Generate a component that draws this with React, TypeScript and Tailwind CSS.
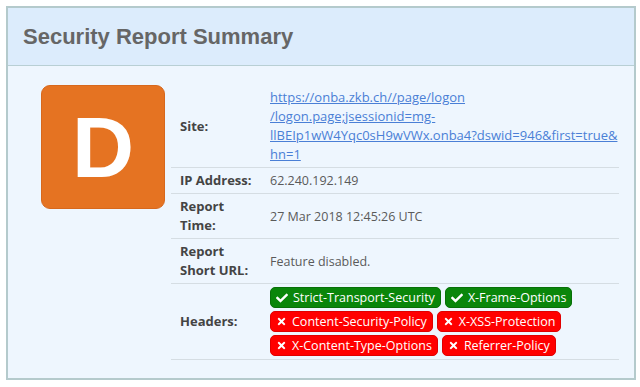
import { FaCheck, FaTimes } from 'react-icons/fa';

const good = ['Strict-Transport-Security', 'X-Frame-Options'];
const bad = ['Content-Security-Policy', 'X-XSS-Protection', 'X-Content-Type-Options', 'Referrer-Policy'];

function Badge({ ok, label }: { ok: boolean; label: string }) {
  return (
    <span
      className={
        ok
          ? 'inline-flex items-center gap-[5px] h-[21px] px-[5px] rounded-[5px] bg-[#0a860a] border border-[#087008] text-white text-[12.5px]'
          : 'inline-flex items-center gap-[5px] h-[21px] px-[5px] rounded-[5px] bg-[#ff0000] border border-[#e00000] text-white text-[12.5px]'
      }
    >
      {ok ? <FaCheck className="w-[12px] h-[12px]" /> : <FaTimes className="w-[11px] h-[11px]" />}
      {label}
    </span>
  );
}

function Row({ label, children }: { label: React.ReactNode; children: React.ReactNode }) {
  return (
    <div className="flex items-center border-b border-[#d5dde3] py-[3px]">
      <div className="w-[99px] shrink-0 pl-[9px] font-bold text-[#444] text-[13px]">{label}</div>
      <div className="flex-1 text-[#5a5a5a] text-[12.5px]">{children}</div>
    </div>
  );
}

export default function App() {
  return (
    <div className="w-[640px] h-[387px] bg-white pt-[6px] pl-[6px]" style={{ fontFamily: '"Open Sans", sans-serif' }}>
      <div className="w-[630px] h-[374px] border-2 border-[#b4cacc] bg-[#eef6fe] flex flex-col overflow-hidden">
        <div className="h-[58px] shrink-0 bg-[#dcecfc] border-b border-[#b8cfd4] flex items-center pl-[15px]">
          <h1 className="text-[22px] font-bold text-[#666]" style={{ fontFamily: '"Liberation Sans", Arial, sans-serif' }}>
            Security Report Summary
          </h1>
        </div>
        <div className="flex pt-[19px] pl-[33px] pr-[15px] leading-[19px]">
          <div className="w-[124px] h-[124px] shrink-0 rounded-[9px] bg-[#e57322] border border-[#d7681d] flex items-center justify-center">
            <span className="text-white font-bold text-[86px] leading-none" style={{ fontFamily: '"Liberation Sans", Arial, sans-serif' }}>
              D
            </span>
          </div>
          <div className="flex-1 ml-[6px] flex flex-col">
            <Row label="Site:">
              <a href="#" className="text-[#4a7fd6] underline break-all text-[13px]">
                https://onba.zkb.ch//page/logon
                <br />
                /logon.page;jsessionid=mg-
                <br />
                llBEIp1wW4Yqc0sH9wVWx.onba4?dswid=946&amp;first=true&amp;
                <br />
                hn=1
              </a>
            </Row>
            <Row label="IP Address:">62.240.192.149</Row>
            <Row label={<>Report<br />Time:</>}>27 Mar 2018 12:45:26 UTC</Row>
            <Row label={<>Report<br />Short URL:</>}>Feature disabled.</Row>
            <Row label="Headers:">
              <div className="flex flex-wrap gap-x-[4px] gap-y-[3px] pr-[10px]">
                {good.map((g) => (
                  <Badge key={g} ok label={g} />
                ))}
                {bad.map((b) => (
                  <Badge key={b} ok={false} label={b} />
                ))}
              </div>
            </Row>
          </div>
        </div>
      </div>
    </div>
  );
}
